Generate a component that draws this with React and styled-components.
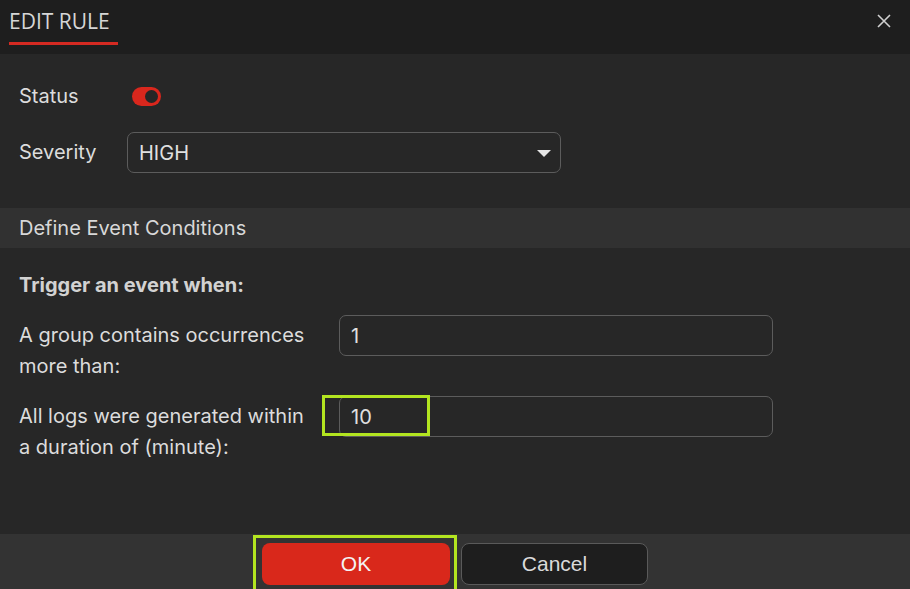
import React from "react";
import styled, { createGlobalStyle } from "styled-components";

const Global = createGlobalStyle`
  html, body { margin: 0; padding: 0; background: #272727; }
  body { font-family: Inter, "Noto Sans", sans-serif; }
`;

const Dialog = styled.div`
  width: 910px;
  height: 589px;
  display: flex;
  flex-direction: column;
  background: #272727;
  color: #dcdcdc;
  overflow: hidden;
`;

const Header = styled.div`
  height: 54px;
  flex: none;
  display: flex;
  align-items: flex-start;
  justify-content: space-between;
  background: #1e1e1e;
  padding: 0 18px 0 9px;
`;

const Title = styled.div`
  margin-top: 8px;
  padding-bottom: 8px;
  border-bottom: 3px solid #d42a22;
  font-family: "Open Sans", Inter, sans-serif;
  font-size: 21px;
  line-height: 26px;
  color: #d6d6d6;
  width: 109px;
  white-space: nowrap;
`;

const Close = styled.button`
  margin-top: 13px;
  background: none;
  border: none;
  padding: 0;
  width: 16px;
  height: 16px;
  cursor: pointer;
`;

const Top = styled.div`
  padding: 27px 19px 0;
  display: flex;
  flex-direction: column;
  height: 154px;
  box-sizing: border-box;
  flex: none;
`;

const Row = styled.div`
  display: flex;
  align-items: center;
  margin-bottom: ${(p) => p.$mb || 0}px;
`;

const Label = styled.div`
  width: ${(p) => p.$w}px;
  margin-top: ${(p) => p.$mt || 0}px;
  font-size: 20px;
  line-height: 31px;
  color: #dcdcdc;
  flex: none;
`;

const Toggle = styled.div`
  width: 29px;
  height: 19px;
  border-radius: 10px;
  background: #d9271d;
  position: relative;
  &::after {
    content: "";
    position: absolute;
    right: 3px;
    top: 3px;
    width: 13px;
    height: 13px;
    border-radius: 50%;
    background: #262626;
  }
`;

const Select = styled.div`
  width: 434px;
  height: 41px;
  box-sizing: border-box;
  border: 1.5px solid #5c5c5c;
  border-radius: 7px;
  display: flex;
  align-items: center;
  justify-content: space-between;
  padding: 0 9px 0 11px;
  font-size: 20px;
  color: #e0e0e0;
`;

const Caret = styled.span`
  width: 0;
  height: 0;
  border-left: 7px solid transparent;
  border-right: 7px solid transparent;
  border-top: 7px solid #e6e6e6;
  margin-top: 2px;
`;

const Section = styled.div`
  height: 40px;
  flex: none;
  background: #313131;
  display: flex;
  align-items: center;
  padding: 0 19px;
  font-size: 20px;
  color: #d8d8d8;
`;

const Body = styled.div`
  flex: 1;
  padding: 22px 19px 0;
  display: flex;
  flex-direction: column;
`;

const Strong = styled.div`
  font-size: 20px;
  font-weight: 700;
  color: #d2d2d2;
  line-height: 30px;
  margin-bottom: 15px;
`;

const Field = styled.div`
  display: flex;
  align-items: flex-start;
  margin-bottom: ${(p) => p.$mb || 0}px;
`;

const InputWrap = styled.div`
  position: relative;
`;

const Input = styled.div`
  width: 434px;
  height: 41px;
  box-sizing: border-box;
  border: 1.5px solid #5c5c5c;
  border-radius: 7px;
  display: flex;
  align-items: center;
  padding: 0 11px;
  font-size: 20px;
  color: #e0e0e0;
`;

const Highlight = styled.div`
  position: absolute;
  border: 3px solid #b3e520;
  box-sizing: border-box;
  pointer-events: none;
`;

const Footer = styled.div`
  height: 55px;
  flex: none;
  background: #333333;
  display: flex;
  justify-content: center;
  align-items: flex-start;
  padding-top: 9px;
  box-sizing: border-box;
  gap: 11px;
`;

const BtnWrap = styled.div`
  position: relative;
`;

const Button = styled.button`
  width: ${(p) => p.$w}px;
  height: 42px;
  border-radius: 8px;
  font-family: "Liberation Sans", Arial, sans-serif;
  font-size: 21px;
  cursor: pointer;
  background: ${(p) => (p.$primary ? "#d9281b" : "#1e1e1e")};
  color: ${(p) => (p.$primary ? "#f4f4f4" : "#dadada")};
  border: ${(p) => (p.$primary ? "none" : "1.5px solid #5a5a5a")};
`;

export default function App() {
  return (
    <Dialog>
      <Global />
      <Header>
        <Title>EDIT RULE</Title>
        <Close aria-label="close">
          <svg width="16" height="16" viewBox="0 0 16 16">
            <path d="M2 2L14 14M14 2L2 14" stroke="#d0d0d0" strokeWidth="1.6" />
          </svg>
        </Close>
      </Header>
      <Top>
        <Row $mb={20}>
          <Label $w={113}>Status</Label>
          <Toggle />
        </Row>
        <Row>
          <Label $w={108}>Severity</Label>
          <Select>
            HIGH
            <Caret />
          </Select>
        </Row>
      </Top>
      <Section>Define Event Conditions</Section>
      <Body>
        <Strong>Trigger an event when:</Strong>
        <Field $mb={14}>
          <Label $w={320} $mt={5}>
            A group contains occurrences
            <br />
            more than:
          </Label>
          <InputWrap>
            <Input>1</Input>
          </InputWrap>
        </Field>
        <Field>
          <Label $w={320} $mt={5}>
            All logs were generated within
            <br />a duration of (minute):
          </Label>
          <InputWrap>
            <Input>10</Input>
            <Highlight style={{ left: -17, top: -1, width: 108, height: 41 }} />
          </InputWrap>
        </Field>
      </Body>
      <Footer>
        <BtnWrap>
          <Button $primary $w={188}>
            OK
          </Button>
          <Highlight style={{ left: -9, top: -8, width: 204, height: 60 }} />
        </BtnWrap>
        <Button $w={187}>Cancel</Button>
      </Footer>
    </Dialog>
  );
}
